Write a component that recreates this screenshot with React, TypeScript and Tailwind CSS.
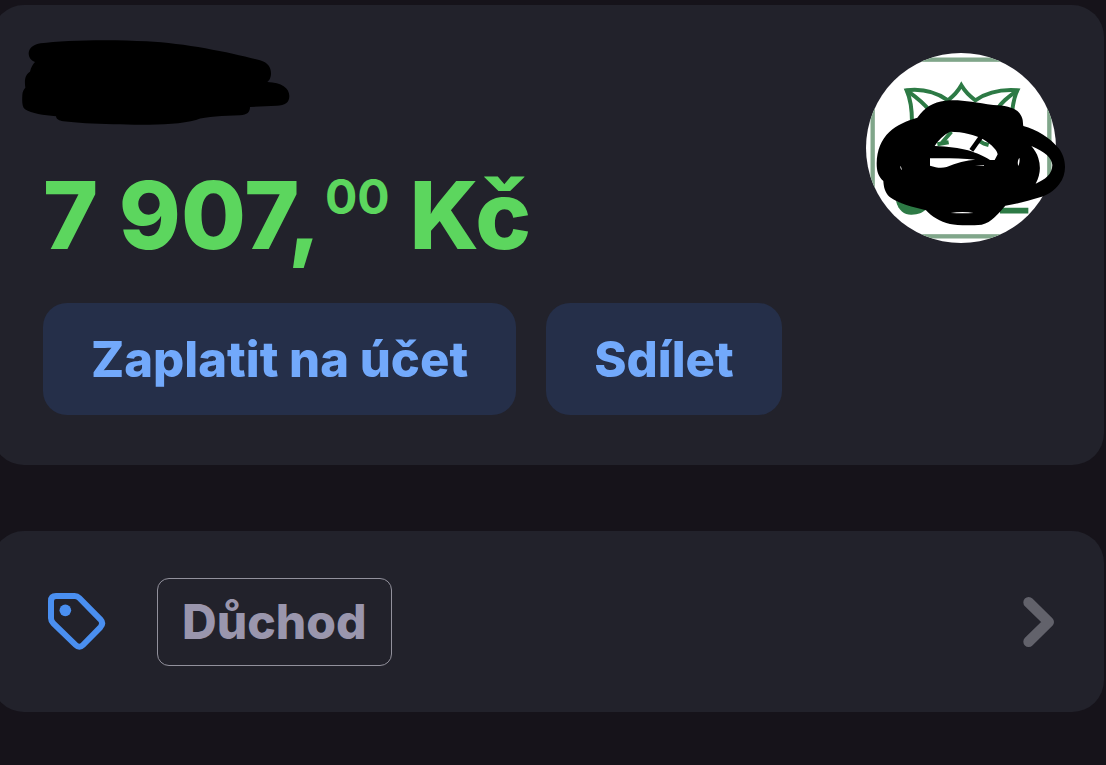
import React from "react";

function RedactedName() {
  return (
    <svg viewBox="66 120 804 255" className="block h-[85px] w-[268px]" aria-hidden="true">
      <path
        fill="#000"
        d="M122 130C190 120 340 118 440 124C560 130 700 160 780 181C803 187 813 202 813 220C813 234 808 241 802 246C845 248 868 264 868 288C868 308 855 316 830 317L750 321C750 336 742 345 720 346C670 349 620 348 588 360C530 377 420 375 340 373C280 372 230 368 190 364C177 362 169 358 168 349C130 346 95 340 75 328C66 320 66 305 67 285C67 275 72 267 76 263C72 235 78 222 90 215C93 202 99 192 105 186C92 181 86 172 86 159C88 143 101 134 122 130Z"
      />
    </svg>
  );
}

function MerchantLogo() {
  return (
    <svg viewBox="48 54 600 570" className="block h-[190px] w-[200px] shrink-0" aria-hidden="true">
      <defs>
        <clipPath id="disc">
          <circle cx="333" cy="339" r="285" />
        </clipPath>
      </defs>
      <g clipPath="url(#disc)">
        <rect x="48" y="54" width="570" height="570" fill="#fff" />
        <rect x="68" y="74" width="530" height="530" fill="none" stroke="#80a68a" strokeWidth="13" />
        <g fill="none" stroke="#2d7a45" strokeWidth="12" strokeLinejoin="miter">
          <path d="M186 262C186 225 181 190 170 166C220 160 265 176 294 196C311 183 325 167 334 151C344 168 358 183 376 196C410 173 450 162 502 166C490 190 486 220 484 262" />
          <path d="M170 166C195 184 218 200 238 226M502 166C475 186 455 200 442 222" />
          <path d="M304 290L272 328M262 328L296 322M388 318L402 326L416 330" />
        </g>
        <path d="M138 498C145 528 165 540 185 539C205 538 218 534 228 522Z" fill="#2d7a45" />
        <path d="M450 527H535" stroke="#2d7a45" strokeWidth="17" />
      </g>
      <path
        fill="#000"
        fillRule="evenodd"
        d="M202 248C225 215 250 202 285 197C330 192 370 202 430 210C470 212 500 218 512 240C520 252 518 262 520 273C560 284 600 308 626 340C650 370 652 418 628 447C612 468 592 480 570 487C535 498 505 506 466 512C445 535 425 562 395 569C360 572 320 571 300 567C270 560 245 545 228 526C190 516 145 506 119 486C104 472 101 454 100 438C84 424 80 408 80 385C81 345 93 315 118 291C140 270 170 257 202 248ZM300 290C340 290 375 300 398 312C428 330 442 348 443 358L434 375L420 375C385 352 335 335 254 333C265 315 280 300 300 290ZM240 370C285 369 335 370 376 374C350 376 318 383 290 396C274 400 258 398 240 392ZM544 333C585 350 606 370 607 390C607 418 585 434 557 446C571 420 573 395 565 370C561 355 553 344 544 333ZM508 368C503 376 502 385 505 393C508 386 510 376 508 368ZM152 392C150 399 152 402 156 405ZM302 534C325 530 350 530 371 534C350 535 325 535 302 534ZM375 392L402 390L402 392Z"
      />
      <path d="M394 304L364 346" fill="none" stroke="#000" strokeWidth="14" />
    </svg>
  );
}

function TagIcon() {
  return (
    <svg viewBox="0 0 174 174" className="block size-[58px] shrink-0" aria-hidden="true">
      <path
        d="M24 9H80Q88 9 94 15L157 79Q168 91 157 103L105 156Q94 167 83 156L16 91Q9 84 9 76V24Q9 9 24 9Z"
        fill="none"
        stroke="#4a8ff0"
        strokeWidth="18"
        strokeLinejoin="round"
      />
      <circle cx="52" cy="52" r="17.5" fill="#4a8ff0" />
    </svg>
  );
}

function Chevron() {
  return (
    <svg viewBox="0 0 96 150" className="block h-[50px] w-8 shrink-0" aria-hidden="true">
      <path
        d="M17 16L77 75L17 134"
        fill="none"
        stroke="#62626b"
        strokeWidth="32"
        strokeLinecap="round"
        strokeLinejoin="round"
      />
    </svg>
  );
}

function ActionButton({ children }: { children: React.ReactNode }) {
  return (
    <button
      type="button"
      className="h-28 rounded-3xl bg-[#252f49] px-12 text-[49px] leading-none font-extrabold whitespace-nowrap text-[#72a9fb]"
    >
      {children}
    </button>
  );
}

export default function App() {
  return (
    <main className="min-h-screen overflow-hidden bg-[#16131a] pt-[5px] font-['Inter',sans-serif]">
      <section className="mr-0.5 -ml-2 flex items-start justify-between rounded-[32px] bg-[#22222b] pt-[35px] pr-[38px] pb-[50px] pl-[30px]">
        <div>
          <RedactedName />
          <div className="pl-[21px]">
            <p className="mt-[42px] flex items-start text-[94px] leading-[96px] font-extrabold whitespace-nowrap text-[#5cd65e]">
              <span>7 907,</span>
              <sup className="top-0 mt-[6px] ml-1 text-[48px] leading-[48px] font-bold">00</sup>
              <span className="ml-5">Kč</span>
            </p>
            <div className="mt-10 flex gap-[30px]">
              <ActionButton>Zaplatit na účet</ActionButton>
              <ActionButton>Sdílet</ActionButton>
            </div>
          </div>
        </div>
        <div className="pt-[13px]">
          <MerchantLogo />
        </div>
      </section>

      <section className="mt-[66px] mr-0.5 -ml-2 rounded-[32px] bg-[#22222b]">
        <button type="button" className="flex w-full items-center pt-[47px] pb-[46px] pr-[49px] pl-14 text-left">
          <TagIcon />
          <span className="ml-[51px] rounded-xl border border-[#92919c] px-6 py-[15px] text-[48px] leading-[56px] font-extrabold text-[#9a96ad]">
            Důchod
          </span>
          <span className="ml-auto">
            <Chevron />
          </span>
        </button>
      </section>
    </main>
  );
}
